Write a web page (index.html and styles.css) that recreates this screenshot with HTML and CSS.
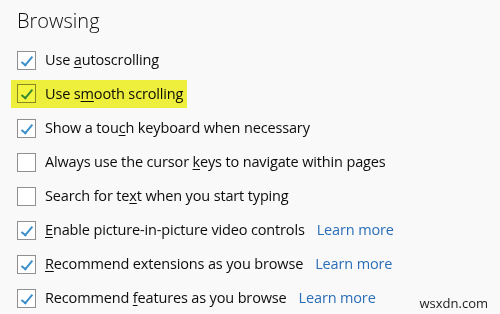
FILE: index.html
```html
<!DOCTYPE html>
<html>
    <head>
        <meta charset="utf-8">
        <title>Browsing</title>
        <link rel="stylesheet" href="styles.css">
    </head>
    <body>
        <h1>Browsing</h1>

<ul class="options">
  <li class="option">
    <span class="box checked"></span>
    <span class="label">Use <u>a</u>utoscrolling</span>
  </li>
  <li class="option">
    <span class="marked">
      <span class="box checked"></span>
      <span class="label">Use s<u>m</u>ooth scrolling</span>
    </span>
  </li>
  <li class="option">
    <span class="box checked"></span>
    <span class="label">Show a tou<u>c</u>h keyboard when necessary</span>
  </li>
  <li class="option">
    <span class="box"></span>
    <span class="label">Always use the cursor <u>k</u>eys to navigate within pages</span>
  </li>
  <li class="option">
    <span class="box"></span>
    <span class="label">Search for te<u>x</u>t when you start typing</span>
  </li>
  <li class="option">
    <span class="box checked"></span>
    <span class="label"><u>E</u>nable picture-in-picture video controls</span>
    <a class="learn" href="#">Learn more</a>
  </li>
  <li class="option">
    <span class="box checked"></span>
    <span class="label"><u>R</u>ecommend extensions as you browse</span>
    <a class="learn" href="#">Learn more</a>
  </li>
  <li class="option">
    <span class="box checked"></span>
    <span class="label">Recommend <u>f</u>eatures as you browse</span>
    <a class="learn" href="#">Learn more</a>
  </li>
</ul>

<div class="watermark">wsxdn.com</div>
    </body>
</html>
```

FILE: styles.css
```css
html {
  background: #f9f9fa;
}

body {
  color: #0c0c0d;
  font: 400 14.5px/1.4 "Open Sans", sans-serif;
  letter-spacing: -0.15px;
  margin: 0;
  padding: 0 0 0 17px;
  position: relative;
  height: 314px;
  overflow: hidden;
}

h1 {
  font-weight: 300;
  font-size: 20px;
  line-height: 30px;
  letter-spacing: 0;
  margin: 0;
  padding: 6px 0 0;
}

.options {
  list-style: none;
  margin: 7px 0 0;
  padding: 0;
}

.option {
  display: flex;
  align-items: center;
  height: 34px;
}

.box {
  box-sizing: border-box;
  flex: none;
  width: 19px;
  height: 19px;
  border: 1px solid #8f8f94;
  background: #fff;
  margin-right: 9px;
  position: relative;
}

  .box.checked::after {
    content: "";
    position: absolute;
      left: 6px;
      top: 2px;
    width: 4px;
    height: 10px;
    border: solid #3a8fcc;
    border-width: 0 2px 2px 0;
    transform: rotate(40deg);
  }

.label u {
  text-decoration-thickness: 1px;
  text-underline-offset: 2px;
}

.learn {
  color: #2b6eb7;
  text-decoration: none;
  margin-left: 12px;
}

.marked {
  display: inline-flex;
  align-items: center;
  position: relative;
}

  .marked::after {
    content: "";
    position: absolute;
      top: -4px;
      bottom: -4px;
      left: -6px;
      right: -4px;
    background: #f4f53e;
    mix-blend-mode: multiply;
  }

.watermark {
  position: absolute;
    right: 12px;
    bottom: 2px;
  font-size: 13px;
  letter-spacing: 0;
  color: #222;
}
```
